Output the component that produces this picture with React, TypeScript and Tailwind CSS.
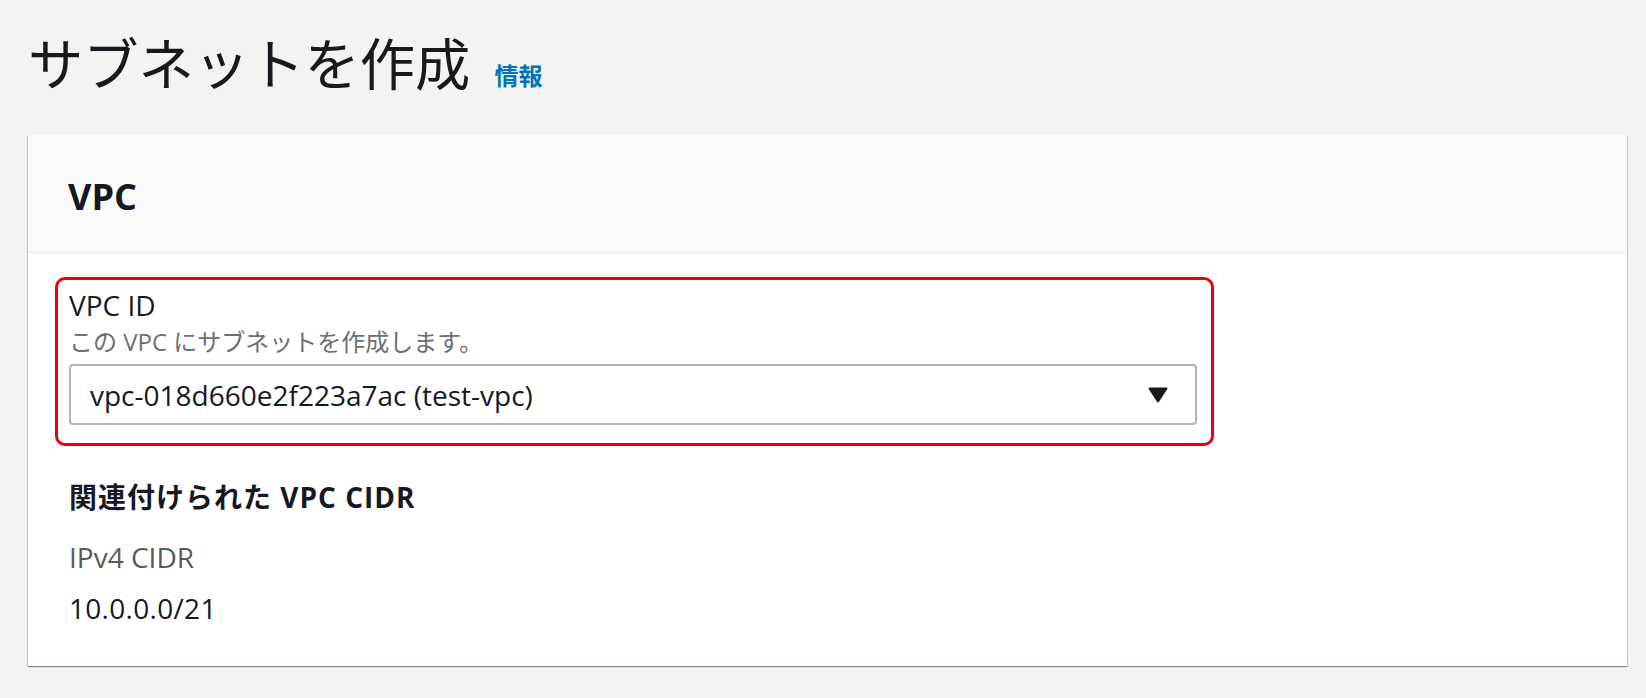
import React from 'react'

const FONT = '"Open Sans", "Noto Sans", "Noto Sans CJK JP", sans-serif'

const App = () => {
    return (
        <div className="min-h-[698px] w-full bg-[#f2f3f3] pl-[28px] pr-[19px] pt-[31px] pb-[35px] text-[#16191f]" style={{ fontFamily: FONT }}>
            <div className="flex items-baseline gap-[24px]">
                <h1 className="text-[55.3px] leading-[66px] font-normal">サブネットを作成</h1>
                <a className="text-[24px] font-bold text-[#0073bb] cursor-pointer">情報</a>
            </div>

            <div className="mt-[38px] bg-white shadow-[0_1px_1px_0_rgba(0,28,36,0.3),1px_1px_1px_0_rgba(0,28,36,0.15),-1px_1px_1px_0_rgba(0,28,36,0.15)]">
                <div className="bg-[#fafafa] border-b border-[#eaeded] px-[40px] pt-[40px] pb-[33px]">
                    <h2 className="text-[36px] leading-[44px] font-bold">VPC</h2>
                </div>

                <div className="px-[27px] pt-[24px] pb-[38px]">
                    <div className="w-[1159px] border-[3px] border-[#e8000b] rounded-[10px] pl-[11px] pr-[14px] pt-[5px] pb-[18px]">
                        <div className="text-[28px] leading-[40px]">VPC ID</div>
                        <div className="text-[24px] leading-[34px] text-[#687078]">この VPC にサブネットを作成します。</div>
                        <div className="mt-[5px] h-[61px] border-2 border-[#aab7b8] rounded-[4px] bg-white flex items-center justify-between pl-[19px] pr-[27px]">
                            <span className="text-[28px] leading-[40px]">vpc-018d660e2f223a7ac (test-vpc)</span>
                            <svg width="20" height="16" viewBox="0 0 20 16">
                                <path d="M1.5 1.5 L18.5 1.5 L10 14.5 Z" fill="#16191f" stroke="#16191f" strokeWidth="2" strokeLinejoin="round" />
                            </svg>
                        </div>
                    </div>

                    <div className="px-[14px]">
                        <div className="mt-[31px] text-[28px] leading-[40px] font-bold tracking-[1px]">関連付けられた VPC CIDR</div>
                        <div className="mt-[20px] text-[28px] leading-[40px] text-[#545b64]">IPv4 CIDR</div>
                        <div className="mt-[11px] text-[28px] leading-[40px] tracking-[0.3px]">10.0.0.0/21</div>
                    </div>
                </div>
            </div>
        </div>
    )
}

export default App
